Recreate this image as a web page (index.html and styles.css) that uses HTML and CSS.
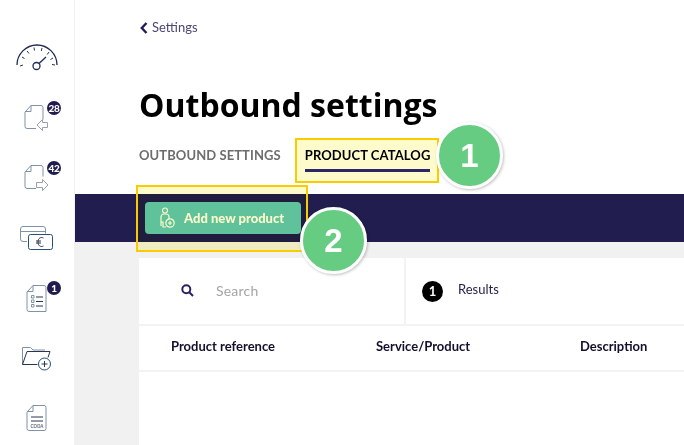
FILE: index.html
```html
<!DOCTYPE html>
<html lang="en">
<head>
<meta charset="utf-8">
<title>Outbound settings</title>
<link rel="stylesheet" href="styles.css">
</head>
<body>
<div class="app">
  <nav class="sidebar">
    <div class="nav-item">
      <svg class="nav-icon" viewBox="0 0 74 60"><path class="ink strong" d="M17 37a20 20 0 0 1 40 0"/><path class="ink thin" d="M20 38l3-1M22 29l2.500 1.500M27 23l2 2.500M34 19.500l.5 3M42 20l-.7 3M49 24l-1.800 2.500M53 30l-2.500 1.500M55 37l-3-.5"/><circle class="ink strong" cx="36.500" cy="38" r="3.500"/><path class="ink strong" d="M39 35.500l7-6.500"/></svg>
    </div>
    <div class="nav-item">
      <svg class="nav-icon" viewBox="0 0 74 60"><path class="soft" d="M31 17.500h10a2 2 0 0 1 2 2v12M36 40.500H27a2 2 0 0 1-2-2V24l6-6.500v6h-6"/><path class="arrow" d="M37 37l5.500-5.500v3h5v5h-5v3z"/></svg>
      <span class="badge">28</span>
    </div>
    <div class="nav-item">
      <svg class="nav-icon" viewBox="0 0 74 60"><path class="soft" d="M31 17.500h10a2 2 0 0 1 2 2v9M36 40.500H27a2 2 0 0 1-2-2V24l6-6.500v6h-6"/><path class="arrow" d="M48 37l-5.500-5.500v3h-6v5h6v3z"/></svg>
      <span class="badge">42</span>
    </div>
    <div class="nav-item">
      <svg class="nav-icon" viewBox="0 0 74 60"><path class="soft" d="M27 33.500h-4a2.500 2.500 0 0 1-2.500-2.500V21a2.500 2.500 0 0 1 2.500-2.500h20a2.500 2.500 0 0 1 2.500 2.500v4.500M21 23.500h24"/><rect class="ink-blue" x="28.500" y="26.500" width="24" height="15" rx="2"/><path class="ink thin" d="M43.500 30c-3-1.500-5.500.5-5.500 4s2.500 5.500 5.500 4M36 33h5M36 35h5"/></svg>
    </div>
    <div class="nav-item">
      <svg class="nav-icon" viewBox="0 0 74 60"><path class="soft" d="M33 17.500h11a2 2 0 0 1 2 2v24H29a2 2 0 0 1-2-2V24l6-6.500v6h-6"/><path class="soft" d="M31.500 27.500h2.500v2.500h-2.500zM31.500 32h2.500v2.500h-2.500zM31.500 36.500h2.500V39h-2.500z"/><path class="ink thin" d="M36 29h7M36 33.500h7M36 38h7"/></svg>
      <span class="badge">1</span>
    </div>
    <div class="nav-item">
      <svg class="nav-icon" viewBox="0 0 74 60"><path class="soft" d="M22.500 36.500v-17h8l2.500 2.500h12"/><path class="ink" d="M22.500 36.500l4.500-13h23l-2 6M22.500 36.500h15"/><circle class="ink-blue" cx="44.500" cy="36" r="6"/><path class="ink thin" d="M41.500 36h6M44.500 33v6"/></svg>
    </div>
    <div class="nav-item">
      <svg class="nav-icon" viewBox="0 0 74 60"><path class="soft" d="M33 17.500h11a2 2 0 0 1 2 2v21a2 2 0 0 1-2 2H29a2 2 0 0 1-2-2V24l6-6.500v6h-6"/><path class="ink thin" d="M31 29h12M31 33h12"/><text class="tiny" x="37" y="39.500" text-anchor="middle">CODA</text></svg>
    </div>
  </nav>
  <main class="main">
    <header class="head">
      <a class="back" href="#">
        <svg class="back-icon" viewBox="0 0 8 12"><path d="M6.500 1L1.800 6l4.700 5"/></svg>
        <span>Settings</span>
      </a>
      <h1 class="title">Outbound settings</h1>
      <div class="tabs">
        <span class="tab">OUTBOUND SETTINGS</span>
        <span class="tab tab-active">PRODUCT CATALOG</span>
      </div>
    </header>
    <div class="band">
      <button class="add" type="button">
        <svg class="add-icon" viewBox="0 0 16 22"><circle cx="6" cy="3.500" r="2.500"/><path d="M2 19V10a3 3 0 0 1 3-3h2a3 3 0 0 1 3 3v2M2 15h2v5h3"/><circle cx="11" cy="16" r="4.200"/><path d="M9 16h4M11 14v4"/></svg>
        <span>Add new product</span>
      </button>
    </div>
    <section class="content">
      <div class="card">
        <div class="toolbar">
          <div class="search">
            <svg class="search-icon" viewBox="0 0 13 13"><circle cx="5.300" cy="5.300" r="4"/><path d="M8.300 8.300l3.700 3.700"/></svg>
            <span class="placeholder">Search</span>
          </div>
          <div class="results">
            <span class="count">1</span>
            <span class="results-label">Results</span>
          </div>
        </div>
        <div class="table-head">
          <span>Product reference</span>
          <span>Service/Product</span>
          <span>Description</span>
        </div>
      </div>
    </section>
  </main>
</div>
<div class="mark mark-tab"></div>
<div class="mark mark-add"></div>
<div class="step step-one">1</div>
<div class="step step-two">2</div>
</body>
</html>
```
FILE: styles.css
```css
* { box-sizing: border-box; }
html, body { margin: 0; height: 100%; overflow: hidden; }
body { font-family: Lato, "Liberation Sans", sans-serif; background: #fff; color: #201c4e; position: relative; }

.app { display: flex; height: 445px; }

.sidebar { flex: 0 0 75px; padding-top: 28px; border-right: 1px solid #f1f1f1; background: #fff; }
.nav-item { position: relative; height: 60px; }
.nav-icon { display: block; width: 74px; height: 60px; }
.nav-icon path, .nav-icon circle, .nav-icon rect { fill: none; stroke-width: 1; }
.ink { stroke: #2a3350; stroke-width: 1.200; }
.nav-icon .strong { stroke: #1f2a55; stroke-width: 1.300; }
.thin { stroke-width: 1; }
.soft { stroke: #7e93a6; }
.arrow { stroke: #9a9fb0; }
.ink-blue { stroke: #25507c; }
.tiny { font: 700 4.500px "Liberation Sans", sans-serif; fill: #67707c; }
.badge { position: absolute; left: 47px; top: 13px; width: 14px; height: 14px; border-radius: 50%; background: #201c4e; color: #fff; font-size: 10px; font-weight: 900; line-height: 14px; text-align: center; letter-spacing: -.3px; }

.main { flex: 1; min-width: 0; display: flex; flex-direction: column; }
.head { height: 194px; padding-left: 65px; }
.back { display: flex; align-items: center; gap: 4px; padding-top: 19px; color: #4b4672; text-decoration: none; font-size: 13px; line-height: 17px; }
.back-icon { width: 8px; height: 12px; fill: none; stroke: #201c5e; stroke-width: 2.400; }
.title { margin: 47px 0 0 -1px; font: 700 32px/44px "Open Sans", sans-serif; color: #000; }
.tabs { display: flex; gap: 24px; margin-top: 19px; margin-left: -1px; font-size: 13px; font-weight: 700; line-height: 18px; letter-spacing: .08px; }
.tab { color: #6d6d6d; padding-bottom: 5px; border-bottom: 3px solid transparent; }
.tab-active { color: #000; border-bottom-color: #2c2780; }

.band { height: 48px; padding: 8px 0 0 70px; background: #211d4f; }
.add { display: flex; align-items: center; width: 156px; height: 32px; padding: 0 0 0 14px; gap: 9px; border: 0; border-radius: 4px; background: #60c6c2; color: #fff; font: 900 13px Lato, sans-serif; }
.add-icon { width: 16px; height: 22px; flex: none; fill: none; stroke: #fff; stroke-width: 1.200; }

.content { flex: 1; padding: 16px 0 0 64px; background: #f1f1f1; }
.card { height: 100%; background: #fff; }
.toolbar { display: flex; height: 68px; border-bottom: 2px solid #f3f3f3; }
.search { flex: 0 0 267px; display: flex; align-items: center; gap: 22px; padding: 0 0 2px 42px; border-right: 2px solid #f3f3f3; }
.search-icon { width: 13px; height: 13px; fill: none; stroke: #272266; stroke-width: 2; }
.placeholder { color: #a5a5a5; font-size: 14px; letter-spacing: .2px; }
.results { display: flex; align-items: center; gap: 15px; padding-left: 16px; }
.count { width: 21px; height: 21px; border-radius: 50%; background: #000; color: #fff; font-size: 13px; font-weight: 700; line-height: 21px; text-align: center; }
.results-label { color: #26234a; font-size: 13px; margin-top: -4px; }
.table-head { display: grid; grid-template-columns: 205px 204px 1fr; align-items: center; height: 46px; padding: 0 0 4px 32px; border-bottom: 2px solid #f3f3f3; color: #12102c; font-size: 13px; font-weight: 700; }

.mark { position: absolute; border: 2px solid #f7cc00; }
.mark::before { content: ""; position: absolute; inset: 0; background: #fdfacb; mix-blend-mode: multiply; }
.mark-tab { left: 295px; top: 138px; width: 144px; height: 45px; }
.mark-add { left: 136px; top: 185px; width: 172px; height: 67px; }

.step { position: absolute; width: 67px; height: 67px; border: 3px solid #fff; border-radius: 50%; background: #66cc82; box-shadow: 1px 1px 3px rgba(0,0,0,.25); color: #fff; font: 700 33px/61px "Liberation Sans", sans-serif; text-align: center; }
.step-one { left: 436px; top: 122px; }
.step-two { left: 300px; top: 207px; }
```
